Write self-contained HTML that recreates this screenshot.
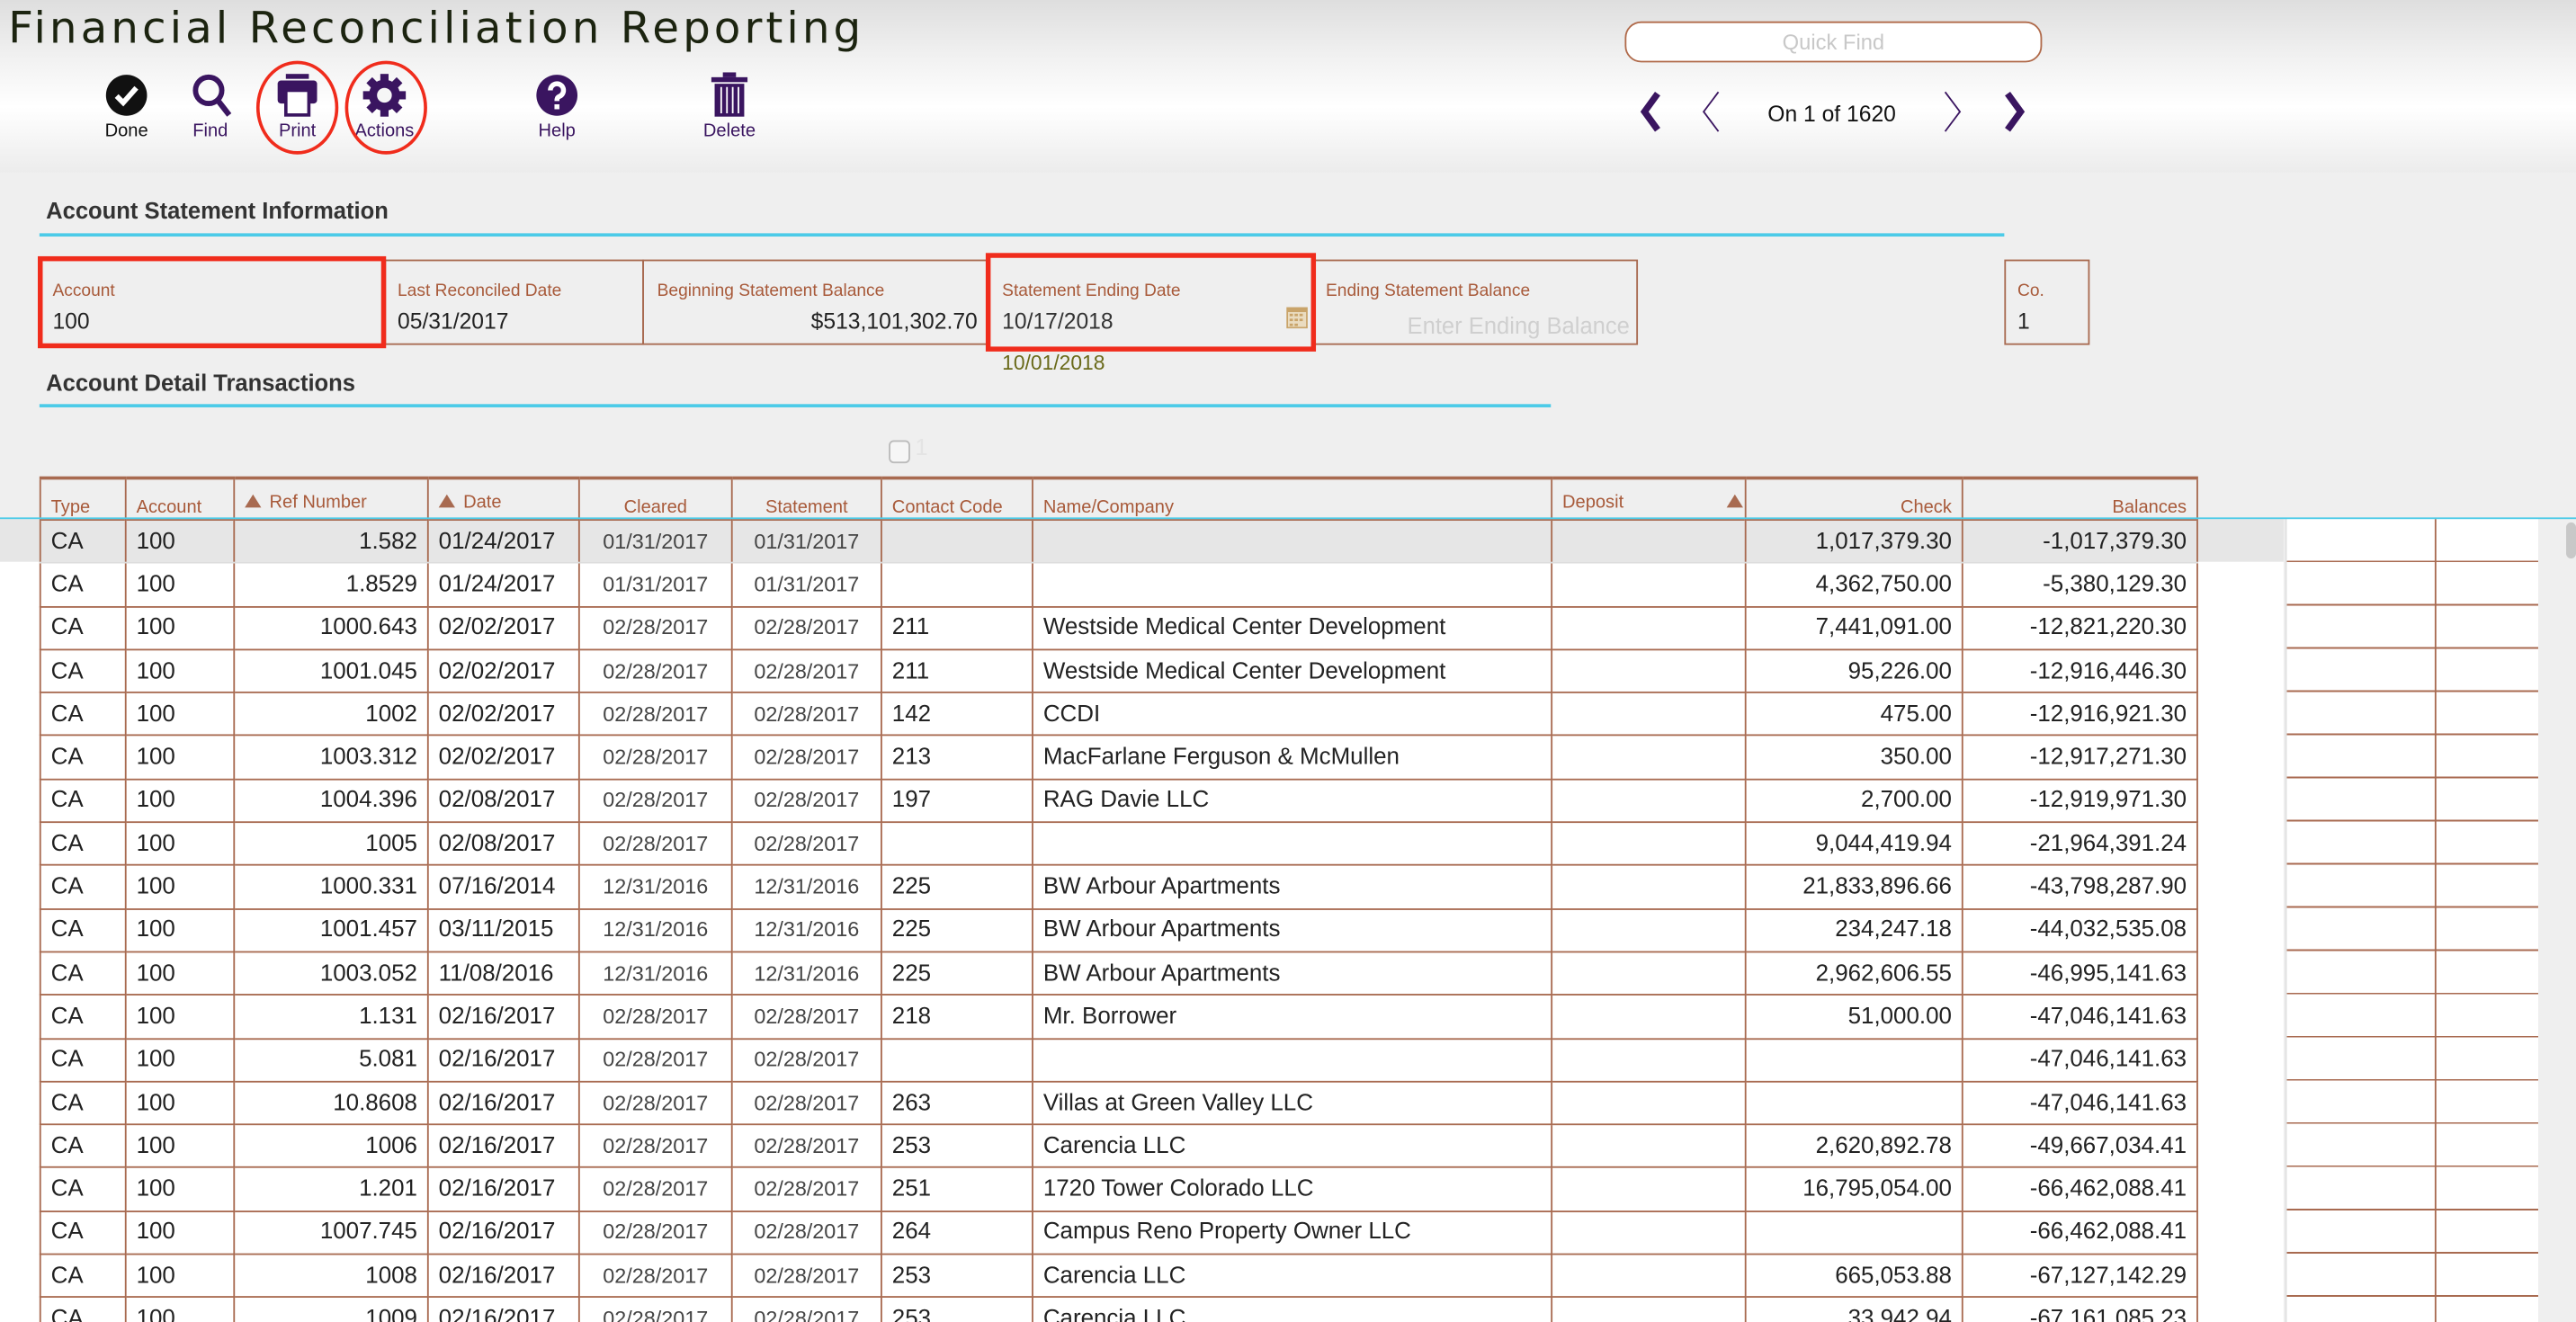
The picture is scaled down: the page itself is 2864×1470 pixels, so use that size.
<!DOCTYPE html>
<html><head><meta charset="utf-8">
<style>
html,body{margin:0;padding:0;width:2864px;height:1470px;overflow:hidden;background:#efefef;}
#w{position:absolute;left:0;top:0;width:1568px;height:805px;transform:scale(1.82653);transform-origin:0 0;font-family:"Liberation Sans",Arial,sans-serif;background:#efefef;overflow:hidden;}
.a{position:absolute;}
#hdr{left:0;top:0;width:1568px;height:105px;background:linear-gradient(#dedede,#f2f2f2 35%,#ffffff 62%,#ececec 100%);}
.lbl{position:absolute;font-size:11px;text-align:center;width:60px;margin-left:-30px;color:#3a1560;top:74px;}
.ib{position:absolute;}
.fl{position:absolute;font-size:10.5px;color:#a85a3a;}
.fv{position:absolute;font-size:13.5px;color:#222;}
.box{position:absolute;border:1px solid #a86a50;box-sizing:border-box;}
.red{position:absolute;border:3px solid #f02c1c;box-sizing:border-box;}
table{border-collapse:collapse;table-layout:fixed;}
#tb{position:absolute;left:24px;top:290px;}
#tb th{height:24px;padding:0;border-left:1px solid #a86a50;border-right:1px solid #a86a50;border-top:2px solid #a86a50;font-weight:normal;font-size:11px;color:#a85a3a;}
#tb th div{position:relative;height:24px;overflow:visible;}
#tb th span.t{position:absolute;left:6px;bottom:1px;white-space:nowrap;line-height:12px;}
#tb th span.tt{position:absolute;left:6px;top:8px;white-space:nowrap;line-height:12px;}
#tb th span.rr{position:absolute;right:6px;bottom:1px;white-space:nowrap;line-height:12px;}
#tb th span.cc{position:absolute;left:0;right:0;text-align:center;bottom:1px;white-space:nowrap;line-height:12px;}
#tb td{height:25.3px;border:1px solid #a86a50;font-size:14.2px;color:#222;padding:0 6px;white-space:nowrap;overflow:hidden;line-height:16px;}
#tb td.r{text-align:right;}
#tb td.c{text-align:center;font-size:12.8px;color:#444;}
#tb tr.g td{background:#e6e6e6;border-bottom-color:#ddd;}
#tb tr.w td{background:#fff;}
.tri{display:inline-block;width:0;height:0;border-left:5px solid transparent;border-right:5px solid transparent;border-bottom:8px solid #a86a50;margin-right:5px;vertical-align:0;}
</style></head><body><div id="w">
<div id="hdr" class="a"></div>
<div class="a" style="left:5px;top:2px;font-family:'DejaVu Sans',sans-serif;font-size:26.5px;letter-spacing:2.2px;color:#1c2410;white-space:nowrap;">Financial Reconciliation Reporting</div>

<svg class="ib" style="left:64px;top:45px" width="26" height="26" viewBox="0 0 26 26"><circle cx="13" cy="13" r="12.5" fill="#111"/><path d="M7 13.5l4 4 8-9" stroke="#fff" stroke-width="3.2" fill="none"/></svg>
<div class="lbl" style="left:77px;color:#111">Done</div>
<svg class="ib" style="left:116px;top:44px" width="26" height="28" viewBox="0 0 26 28"><circle cx="11" cy="11" r="8" stroke="#3a1560" stroke-width="3.2" fill="none"/><path d="M16.5 17l7 9" stroke="#3a1560" stroke-width="3.4"/></svg>
<div class="lbl" style="left:128px">Find</div>
<svg class="ib" style="left:168px;top:44px" width="26" height="28" viewBox="0 0 26 28"><rect x="6" y="1" width="14" height="3" fill="#3a1560"/><rect x="1" y="5" width="24" height="14" rx="2" fill="#3a1560"/><rect x="6" y="11" width="14" height="15" fill="#fff" stroke="#3a1560" stroke-width="2"/></svg>
<div class="lbl" style="left:181px">Print</div>
<svg class="ib" style="left:220px;top:44px" width="28" height="28" viewBox="0 0 28 28"><g fill="#3a1560"><circle cx="14" cy="14" r="9.5"/><rect x="11.5" y="1" width="5" height="26"/><rect x="1" y="11.5" width="26" height="5"/><rect x="11.5" y="1" width="5" height="26" transform="rotate(45 14 14)"/><rect x="11.5" y="1" width="5" height="26" transform="rotate(-45 14 14)"/></g><circle cx="14" cy="14" r="4.5" fill="#f6f6f6"/></svg>
<div class="lbl" style="left:234px">Actions</div>
<svg class="ib" style="left:326px;top:45px" width="26" height="26" viewBox="0 0 26 26"><circle cx="13" cy="13" r="12.5" fill="#3a1560"/><path d="M9 10a4 4 0 1 1 5.5 3.7c-1.3.6-1.5 1.2-1.5 2.8" stroke="#fff" stroke-width="3" fill="none"/><rect x="11.5" y="18.5" width="3" height="3" fill="#fff"/></svg>
<div class="lbl" style="left:339px">Help</div>
<svg class="ib" style="left:432px;top:44px" width="24" height="28" viewBox="0 0 24 28"><rect x="1" y="3" width="22" height="3" fill="#3a1560"/><rect x="8" y="0" width="8" height="3" fill="#3a1560"/><rect x="3" y="7" width="18" height="20" fill="#3a1560"/><g stroke="#fff" stroke-width="1"><path d="M7 9v16M10.5 9v16M14 9v16M17.5 9v16"/></g></svg>
<div class="lbl" style="left:444px">Delete</div>
<div class="a" style="left:156px;top:37px;width:50px;height:57px;border:2px solid #f02c1c;border-radius:50%;box-sizing:border-box"></div>
<div class="a" style="left:210px;top:37px;width:50px;height:57px;border:2px solid #f02c1c;border-radius:50%;box-sizing:border-box"></div>

<div class="a" style="left:989px;top:13px;width:254px;height:25px;border:1px solid #b06a4a;border-radius:10px;background:#fff;box-sizing:border-box;text-align:center;font-size:13px;line-height:23px;color:#c8c8c8">Quick Find</div>
<svg class="a" style="left:995px;top:54px" width="20" height="28" viewBox="0 0 20 28"><path d="M14 3L6 14l8 11" stroke="#3a1560" stroke-width="4" fill="none"/></svg>
<svg class="a" style="left:1034px;top:54px" width="16" height="28" viewBox="0 0 16 28"><path d="M12 2L3 14l9 12" stroke="#3a1560" stroke-width="1" fill="none"/></svg>
<div class="a" style="left:1058px;top:62px;width:114px;text-align:center;font-size:13.5px;color:#111">On 1 of 1620</div>
<svg class="a" style="left:1180px;top:54px" width="16" height="28" viewBox="0 0 16 28"><path d="M4 2l9 12-9 12" stroke="#3a1560" stroke-width="1" fill="none"/></svg>
<svg class="a" style="left:1216px;top:54px" width="20" height="28" viewBox="0 0 20 28"><path d="M6 3l8 11-8 11" stroke="#3a1560" stroke-width="4" fill="none"/></svg>

<div class="a" style="left:28px;top:120px;font-size:14px;font-weight:bold;color:#333">Account Statement Information</div>
<div class="a" style="left:24px;top:142px;width:1196px;height:2px;background:#4ccbe8"></div>
<div class="box" style="left:234px;top:158px;width:158px;height:52px"></div>
<div class="box" style="left:391px;top:158px;width:211px;height:52px"></div>
<div class="box" style="left:799px;top:158px;width:198px;height:52px"></div>
<div class="box" style="left:1220px;top:158px;width:52px;height:52px"></div>
<div class="red" style="left:23px;top:156px;width:212px;height:56px"></div>
<div class="red" style="left:600px;top:154px;width:201px;height:60px"></div>
<div class="fl" style="left:32px;top:171px">Account</div><div class="fv" style="left:32px;top:188px">100</div>
<div class="fl" style="left:242px;top:171px">Last Reconciled Date</div><div class="fv" style="left:242px;top:188px">05/31/2017</div>
<div class="fl" style="left:400px;top:171px">Beginning Statement Balance</div><div class="fv" style="left:400px;width:195px;text-align:right;top:188px">$513,101,302.70</div>
<div class="fl" style="left:610px;top:171px">Statement Ending Date</div><div class="fv" style="left:610px;top:188px;color:#333">10/17/2018</div>
<svg class="a" style="left:783px;top:187px" width="13" height="13" viewBox="0 0 13 13"><rect width="13" height="13" fill="#c9a46a"/><rect x="1" y="3" width="11" height="9" fill="#eadcc0"/><g fill="#c9a46a"><rect x="2" y="4" width="2" height="1.5"/><rect x="5" y="4" width="2" height="1.5"/><rect x="8" y="4" width="2" height="1.5"/><rect x="2" y="7" width="2" height="1.5"/><rect x="5" y="7" width="2" height="1.5"/><rect x="8" y="7" width="2" height="1.5"/><rect x="2" y="10" width="2" height="1.5"/><rect x="5" y="10" width="2" height="1.5"/></g></svg>
<div class="fl" style="left:807px;top:171px">Ending Statement Balance</div><div class="fv" style="left:800px;width:192px;text-align:right;top:190px;color:#cfcfcf;font-size:14px">Enter Ending Balance</div>
<div class="fl" style="left:1228px;top:171px">Co.</div><div class="fv" style="left:1228px;top:188px">1</div>
<div class="a" style="left:610px;top:214px;font-size:12.5px;color:#6a6a1a">10/01/2018</div>

<div class="a" style="left:28px;top:225px;font-size:14px;font-weight:bold;color:#333">Account Detail Transactions</div>
<div class="a" style="left:24px;top:246px;width:920px;height:2px;background:#4ccbe8"></div>
<div class="a" style="left:541px;top:268px;width:11px;height:12px;border:1px solid #bbb;border-radius:3px;background:#f6f6f6"></div>
<div class="a" style="left:557px;top:264px;font-size:14px;color:#e4e4e4">1</div>

<div class="a" style="left:0;top:316px;width:1390px;height:489px;background:#fff"></div>
<div class="a" style="left:0;top:316px;width:1390px;height:26px;background:#e6e6e6"></div>
<div class="a" style="left:1392px;top:316px;width:153px;height:489px;background:#fff;background-image:repeating-linear-gradient(to bottom,transparent 0,transparent 25.3px,#a86a50 25.3px,#a86a50 26.3px);"></div>
<div class="a" style="left:1482px;top:316px;width:1px;height:489px;background:#a86a50"></div>
<div class="a" style="left:1391px;top:316px;width:1px;height:489px;background:#e0e0e0"></div>
<div class="a" style="left:1562px;top:318px;width:6px;height:22px;background:#c8c8c8;border-radius:3px"></div>

<table id="tb">
<colgroup><col style="width:52px"><col style="width:66px"><col style="width:118px"><col style="width:92px"><col style="width:93px"><col style="width:91px"><col style="width:92px"><col style="width:316px"><col style="width:118px"><col style="width:132px"><col style="width:143px"></colgroup>
<tr><th><div><span class="t">Type</span></div></th><th><div><span class="t">Account</span></div></th><th><div><span class="tt"><span class="tri"></span>Ref Number</span></div></th><th><div><span class="tt"><span class="tri"></span>Date</span></div></th><th><div><span class="cc">Cleared</span></div></th><th><div><span class="cc">Statement</span></div></th><th><div><span class="t">Contact Code</span></div></th><th><div><span class="t">Name/Company</span></div></th><th><div><span class="tt">Deposit</span><span class="tri" style="position:absolute;right:1px;top:9px;margin:0"></span></div></th><th><div><span class="rr">Check</span></div></th><th><div><span class="rr">Balances</span></div></th></tr>
<tr class="g"><td>CA</td><td>100</td><td class="r">1.582</td><td>01/24/2017</td><td class="c">01/31/2017</td><td class="c">01/31/2017</td><td></td><td></td><td></td><td class="r">1,017,379.30</td><td class="r">-1,017,379.30</td></tr>
<tr class="w"><td>CA</td><td>100</td><td class="r">1.8529</td><td>01/24/2017</td><td class="c">01/31/2017</td><td class="c">01/31/2017</td><td></td><td></td><td></td><td class="r">4,362,750.00</td><td class="r">-5,380,129.30</td></tr>
<tr class="w"><td>CA</td><td>100</td><td class="r">1000.643</td><td>02/02/2017</td><td class="c">02/28/2017</td><td class="c">02/28/2017</td><td>211</td><td>Westside Medical Center Development</td><td></td><td class="r">7,441,091.00</td><td class="r">-12,821,220.30</td></tr>
<tr class="w"><td>CA</td><td>100</td><td class="r">1001.045</td><td>02/02/2017</td><td class="c">02/28/2017</td><td class="c">02/28/2017</td><td>211</td><td>Westside Medical Center Development</td><td></td><td class="r">95,226.00</td><td class="r">-12,916,446.30</td></tr>
<tr class="w"><td>CA</td><td>100</td><td class="r">1002</td><td>02/02/2017</td><td class="c">02/28/2017</td><td class="c">02/28/2017</td><td>142</td><td>CCDI</td><td></td><td class="r">475.00</td><td class="r">-12,916,921.30</td></tr>
<tr class="w"><td>CA</td><td>100</td><td class="r">1003.312</td><td>02/02/2017</td><td class="c">02/28/2017</td><td class="c">02/28/2017</td><td>213</td><td>MacFarlane Ferguson &amp; McMullen</td><td></td><td class="r">350.00</td><td class="r">-12,917,271.30</td></tr>
<tr class="w"><td>CA</td><td>100</td><td class="r">1004.396</td><td>02/08/2017</td><td class="c">02/28/2017</td><td class="c">02/28/2017</td><td>197</td><td>RAG Davie LLC</td><td></td><td class="r">2,700.00</td><td class="r">-12,919,971.30</td></tr>
<tr class="w"><td>CA</td><td>100</td><td class="r">1005</td><td>02/08/2017</td><td class="c">02/28/2017</td><td class="c">02/28/2017</td><td></td><td></td><td></td><td class="r">9,044,419.94</td><td class="r">-21,964,391.24</td></tr>
<tr class="w"><td>CA</td><td>100</td><td class="r">1000.331</td><td>07/16/2014</td><td class="c">12/31/2016</td><td class="c">12/31/2016</td><td>225</td><td>BW Arbour Apartments</td><td></td><td class="r">21,833,896.66</td><td class="r">-43,798,287.90</td></tr>
<tr class="w"><td>CA</td><td>100</td><td class="r">1001.457</td><td>03/11/2015</td><td class="c">12/31/2016</td><td class="c">12/31/2016</td><td>225</td><td>BW Arbour Apartments</td><td></td><td class="r">234,247.18</td><td class="r">-44,032,535.08</td></tr>
<tr class="w"><td>CA</td><td>100</td><td class="r">1003.052</td><td>11/08/2016</td><td class="c">12/31/2016</td><td class="c">12/31/2016</td><td>225</td><td>BW Arbour Apartments</td><td></td><td class="r">2,962,606.55</td><td class="r">-46,995,141.63</td></tr>
<tr class="w"><td>CA</td><td>100</td><td class="r">1.131</td><td>02/16/2017</td><td class="c">02/28/2017</td><td class="c">02/28/2017</td><td>218</td><td>Mr. Borrower</td><td></td><td class="r">51,000.00</td><td class="r">-47,046,141.63</td></tr>
<tr class="w"><td>CA</td><td>100</td><td class="r">5.081</td><td>02/16/2017</td><td class="c">02/28/2017</td><td class="c">02/28/2017</td><td></td><td></td><td></td><td class="r"></td><td class="r">-47,046,141.63</td></tr>
<tr class="w"><td>CA</td><td>100</td><td class="r">10.8608</td><td>02/16/2017</td><td class="c">02/28/2017</td><td class="c">02/28/2017</td><td>263</td><td>Villas at Green Valley LLC</td><td></td><td class="r"></td><td class="r">-47,046,141.63</td></tr>
<tr class="w"><td>CA</td><td>100</td><td class="r">1006</td><td>02/16/2017</td><td class="c">02/28/2017</td><td class="c">02/28/2017</td><td>253</td><td>Carencia LLC</td><td></td><td class="r">2,620,892.78</td><td class="r">-49,667,034.41</td></tr>
<tr class="w"><td>CA</td><td>100</td><td class="r">1.201</td><td>02/16/2017</td><td class="c">02/28/2017</td><td class="c">02/28/2017</td><td>251</td><td>1720 Tower Colorado LLC</td><td></td><td class="r">16,795,054.00</td><td class="r">-66,462,088.41</td></tr>
<tr class="w"><td>CA</td><td>100</td><td class="r">1007.745</td><td>02/16/2017</td><td class="c">02/28/2017</td><td class="c">02/28/2017</td><td>264</td><td>Campus Reno Property Owner LLC</td><td></td><td class="r"></td><td class="r">-66,462,088.41</td></tr>
<tr class="w"><td>CA</td><td>100</td><td class="r">1008</td><td>02/16/2017</td><td class="c">02/28/2017</td><td class="c">02/28/2017</td><td>253</td><td>Carencia LLC</td><td></td><td class="r">665,053.88</td><td class="r">-67,127,142.29</td></tr>
<tr class="w"><td>CA</td><td>100</td><td class="r">1009</td><td>02/16/2017</td><td class="c">02/28/2017</td><td class="c">02/28/2017</td><td>253</td><td>Carencia LLC</td><td></td><td class="r">33,942.94</td><td class="r">-67,161,085.23</td></tr>
</table>
<div class="a" style="left:0;top:315px;width:1568px;height:1px;background:#4ccbe8"></div>
</div></body></html>
